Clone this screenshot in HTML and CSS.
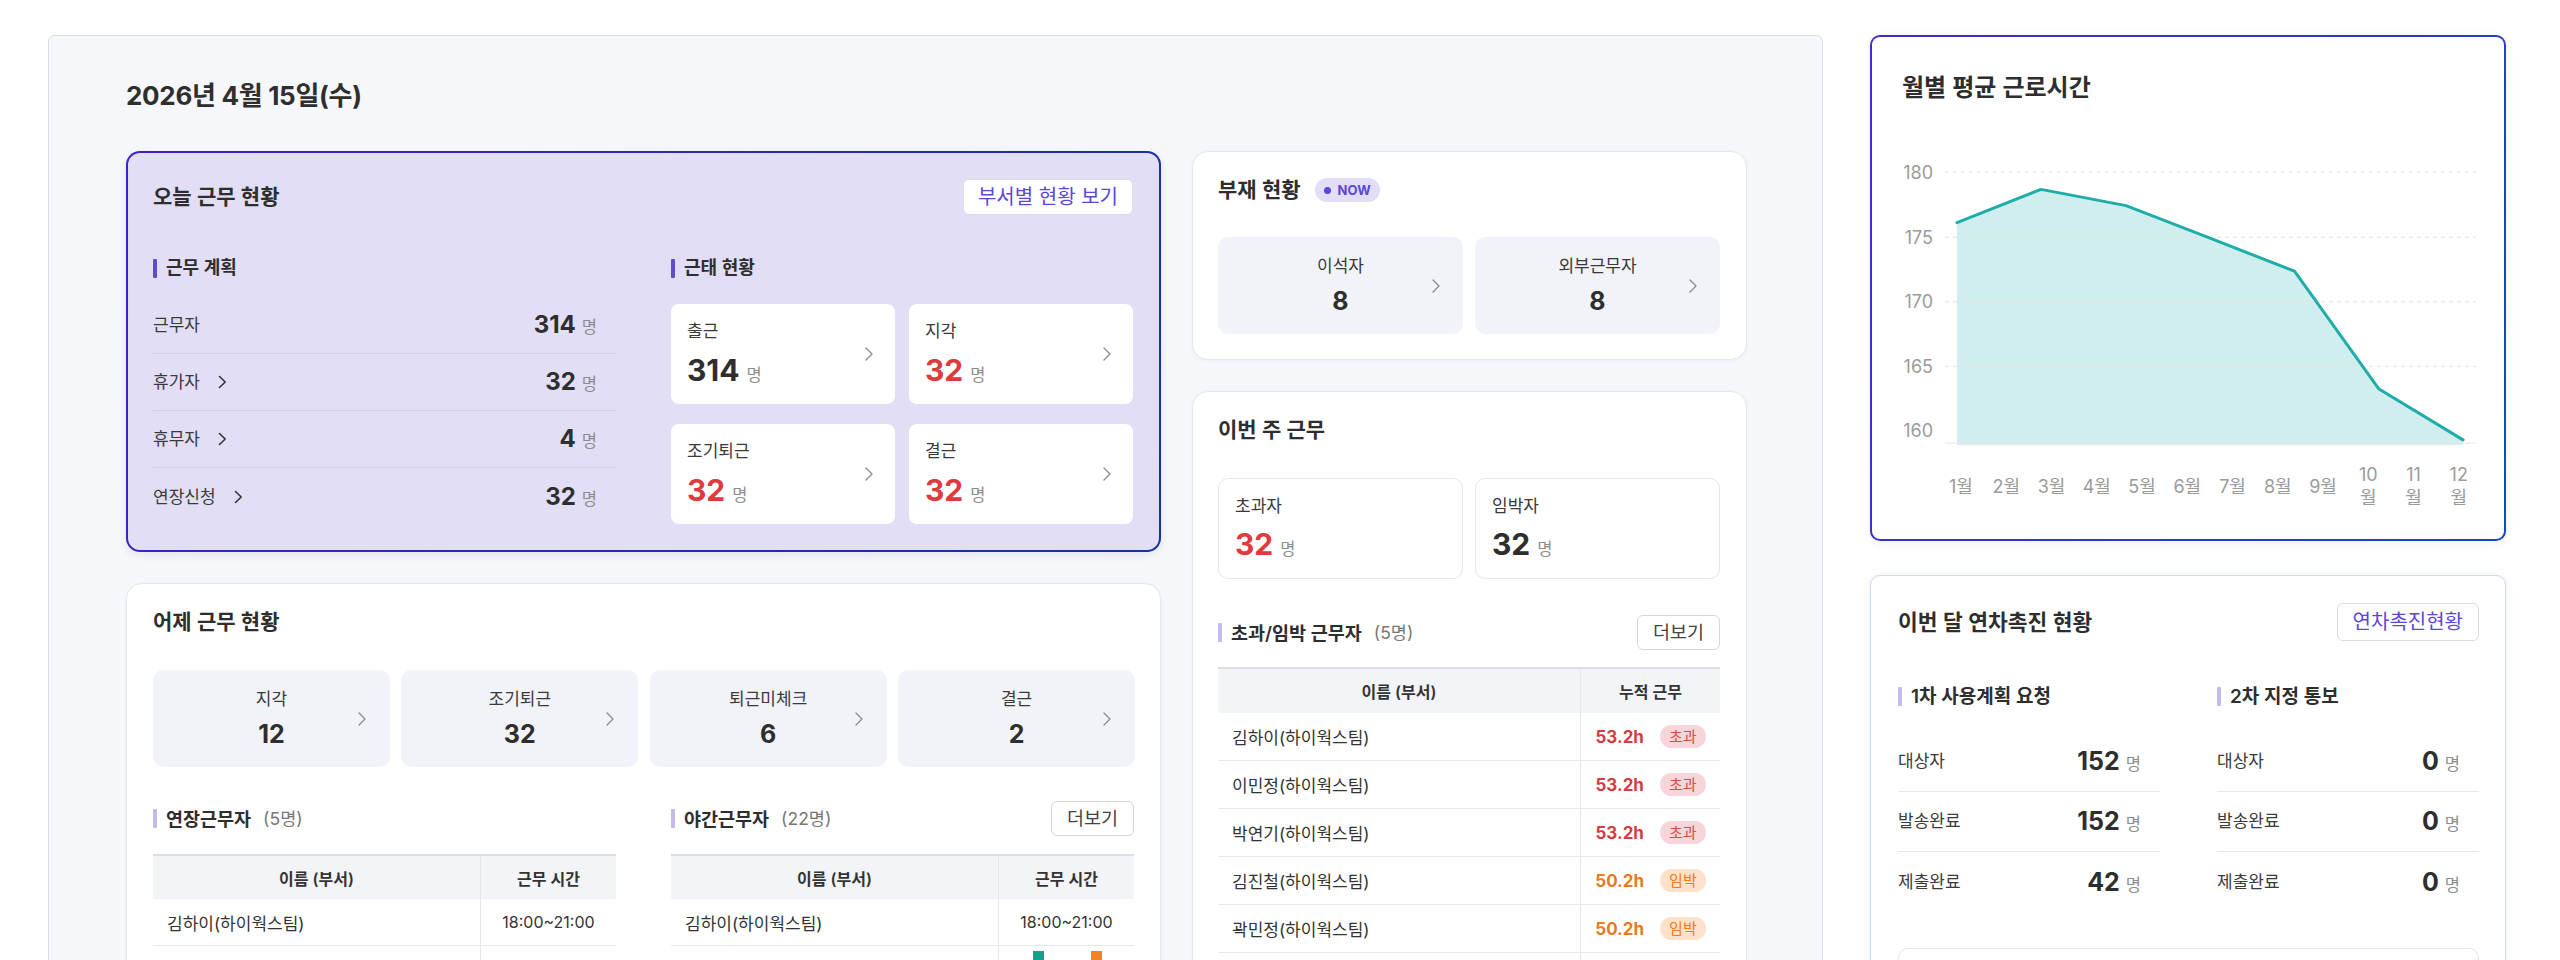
FILE: index.html
```html
<!DOCTYPE html>
<html lang="ko">
<head>
<meta charset="utf-8">
<title>근무 현황 대시보드</title>
<link rel="stylesheet" href="styles.css">
</head>
<body>
<div class="page">
  <section class="panel">
    <h1 class="date">2026년 4월 15일(수)</h1>
    <div class="cols">
      <div class="col">
        <div class="today">
          <div class="card-head">
            <h2 class="card-title">오늘 근무 현황</h2>
            <button class="btn">부서별 현황 보기</button>
          </div>
          <div class="today-body">
            <div>
              <h3 class="sub dark">근무 계획</h3>
              <ul class="kv">
                <li><span class="kv-label">근무자</span><span class="val"><span class="num">314</span><span class="unit">명</span></span></li>
                <li><span class="kv-label">휴가자<svg class="chev-d" viewBox="0 0 9 14"><path d="M1.5 1.5L7.2 7L1.5 12.5"/></svg></span><span class="val"><span class="num">32</span><span class="unit">명</span></span></li>
                <li><span class="kv-label">휴무자<svg class="chev-d" viewBox="0 0 9 14"><path d="M1.5 1.5L7.2 7L1.5 12.5"/></svg></span><span class="val"><span class="num">4</span><span class="unit">명</span></span></li>
                <li><span class="kv-label">연장신청<svg class="chev-d" viewBox="0 0 9 14"><path d="M1.5 1.5L7.2 7L1.5 12.5"/></svg></span><span class="val"><span class="num">32</span><span class="unit">명</span></span></li>
              </ul>
            </div>
            <div>
              <h3 class="sub dark">근태 현황</h3>
              <div class="tiles">
                <div class="tile"><div><div class="tile-label">출근</div><div class="val"><span class="num">314</span><span class="unit">명</span></div></div><svg class="chev" viewBox="0 0 8 14"><path d="M1 1L7 7L1 13"/></svg></div>
                <div class="tile"><div><div class="tile-label">지각</div><div class="val"><span class="num red">32</span><span class="unit">명</span></div></div><svg class="chev" viewBox="0 0 8 14"><path d="M1 1L7 7L1 13"/></svg></div>
                <div class="tile"><div><div class="tile-label">조기퇴근</div><div class="val"><span class="num red">32</span><span class="unit">명</span></div></div><svg class="chev" viewBox="0 0 8 14"><path d="M1 1L7 7L1 13"/></svg></div>
                <div class="tile"><div><div class="tile-label">결근</div><div class="val"><span class="num red">32</span><span class="unit">명</span></div></div><svg class="chev" viewBox="0 0 8 14"><path d="M1 1L7 7L1 13"/></svg></div>
              </div>
            </div>
          </div>
        </div>

        <div class="card yesterday">
          <h2 class="card-title">어제 근무 현황</h2>
          <div class="stats">
            <div class="stat"><div class="stat-text"><div class="stat-label">지각</div><div class="stat-num">12</div></div><svg class="chev" viewBox="0 0 8 14"><path d="M1 1L7 7L1 13"/></svg></div>
            <div class="stat"><div class="stat-text"><div class="stat-label">조기퇴근</div><div class="stat-num">32</div></div><svg class="chev" viewBox="0 0 8 14"><path d="M1 1L7 7L1 13"/></svg></div>
            <div class="stat"><div class="stat-text"><div class="stat-label">퇴근미체크</div><div class="stat-num">6</div></div><svg class="chev" viewBox="0 0 8 14"><path d="M1 1L7 7L1 13"/></svg></div>
            <div class="stat"><div class="stat-text"><div class="stat-label">결근</div><div class="stat-num">2</div></div><svg class="chev" viewBox="0 0 8 14"><path d="M1 1L7 7L1 13"/></svg></div>
          </div>
          <div class="lists">
            <div>
              <div class="list-head"><h3 class="sub">연장근무자<span class="count">(5명)</span></h3></div>
              <div class="tbl">
                <div class="tr th-row"><div>이름 (부서)</div><div>근무 시간</div></div>
                <div class="tr td-row"><div>김하이(하이웍스팀)</div><div>18:00~21:00</div></div>
                <div class="tr td-row"><div></div><div></div></div>
              </div>
            </div>
            <div>
              <div class="list-head"><h3 class="sub">야간근무자<span class="count">(22명)</span></h3><button class="btn-sm">더보기</button></div>
              <div class="tbl">
                <div class="tr th-row"><div>이름 (부서)</div><div>근무 시간</div></div>
                <div class="tr td-row"><div>김하이(하이웍스팀)</div><div>18:00~21:00</div></div>
                <div class="tr td-row"><div></div><div class="bars"><span class="bar teal"></span><span class="bar orange"></span></div></div>
              </div>
            </div>
          </div>
        </div>
      </div>

      <div class="col">
        <div class="card absent">
          <div class="title-row">
            <h2 class="card-title">부재 현황</h2>
            <span class="badge-now">NOW</span>
          </div>
          <div class="boxes">
            <div class="stat"><div class="stat-text"><div class="stat-label">이석자</div><div class="stat-num">8</div></div><svg class="chev" viewBox="0 0 8 14"><path d="M1 1L7 7L1 13"/></svg></div>
            <div class="stat"><div class="stat-text"><div class="stat-label">외부근무자</div><div class="stat-num">8</div></div><svg class="chev" viewBox="0 0 8 14"><path d="M1 1L7 7L1 13"/></svg></div>
          </div>
        </div>

        <div class="card week">
          <h2 class="card-title">이번 주 근무</h2>
          <div class="wboxes">
            <div class="wbox"><div class="tile-label">초과자</div><div class="val"><span class="num red">32</span><span class="unit">명</span></div></div>
            <div class="wbox"><div class="tile-label">임박자</div><div class="val"><span class="num">32</span><span class="unit">명</span></div></div>
          </div>
          <div class="list-head"><h3 class="sub">초과/임박 근무자<span class="count">(5명)</span></h3><button class="btn-sm">더보기</button></div>
          <div class="tbl wide">
            <div class="tr th-row"><div>이름 (부서)</div><div>누적 근무</div></div>
            <div class="tr td-row"><div>김하이(하이웍스팀)</div><div><span class="hours over">53.2h</span><span class="tag over">초과</span></div></div>
            <div class="tr td-row"><div>이민정(하이웍스팀)</div><div><span class="hours over">53.2h</span><span class="tag over">초과</span></div></div>
            <div class="tr td-row"><div>박연기(하이웍스팀)</div><div><span class="hours over">53.2h</span><span class="tag over">초과</span></div></div>
            <div class="tr td-row"><div>김진철(하이웍스팀)</div><div><span class="hours near">50.2h</span><span class="tag near">임박</span></div></div>
            <div class="tr td-row"><div>곽민정(하이웍스팀)</div><div><span class="hours near">50.2h</span><span class="tag near">임박</span></div></div>
            <div class="tr td-row"><div></div><div></div></div>
          </div>
        </div>
      </div>
    </div>
  </section>

  <aside class="right">
    <div class="chart-card">
      <h2 class="card-title chart-title">월별 평균 근로시간</h2>
      <svg class="chart" width="574" height="370" viewBox="0 0 574 370">
        <path class="area" d="M55 72.7L139 39.4L224 55.6L308 88.2L392.5 121.2L476.6 238.7L561 289.9L561 295L55 295Z"/>
        <line class="grid" x1="43" y1="22.2" x2="574" y2="22.2"/>
        <line class="grid" x1="43" y1="87.2" x2="574" y2="87.2"/>
        <line class="grid" x1="43" y1="151.8" x2="574" y2="151.8"/>
        <line class="grid" x1="43" y1="216.4" x2="574" y2="216.4"/>
        <line class="axis" x1="43" y1="293" x2="574" y2="293"/>
        <polyline class="line" points="55,72.7 139,39.4 224,55.6 308,88.2 392.5,121.2 476.6,238.7 561,289.9"/>
        <g class="ylab">
          <text x="31" y="22.2">180</text>
          <text x="31" y="87.2">175</text>
          <text x="31" y="151.8">170</text>
          <text x="31" y="216.4">165</text>
          <text x="31" y="280.6">160</text>
        </g>
        <g class="xlab">
          <text x="59" y="336.6">1월</text>
          <text x="104.25" y="336.6">2월</text>
          <text x="149.5" y="336.6">3월</text>
          <text x="194.75" y="336.6">4월</text>
          <text x="240" y="336.6">5월</text>
          <text x="285.25" y="336.6">6월</text>
          <text x="330.5" y="336.6">7월</text>
          <text x="375.75" y="336.6">8월</text>
          <text x="421" y="336.6">9월</text>
          <text x="466.25" y="324">10</text><text x="466.25" y="347">월</text>
          <text x="511.5" y="324">11</text><text x="511.5" y="347">월</text>
          <text x="556.75" y="324">12</text><text x="556.75" y="347">월</text>
        </g>
      </svg>
    </div>

    <div class="promo">
      <div class="card-head tall">
        <h2 class="card-title promo-title">이번 달 연차촉진 현황</h2>
        <button class="btn tall">연차촉진현황</button>
      </div>
      <div class="promo-body">
        <div>
          <h3 class="sub lg">1차 사용계획 요청</h3>
          <ul class="kv kv2">
            <li><span class="kv-label">대상자</span><span class="val"><span class="num">152</span><span class="unit">명</span></span></li>
            <li><span class="kv-label">발송완료</span><span class="val"><span class="num">152</span><span class="unit">명</span></span></li>
            <li><span class="kv-label">제출완료</span><span class="val"><span class="num">42</span><span class="unit">명</span></span></li>
          </ul>
        </div>
        <div>
          <h3 class="sub lg">2차 지정 통보</h3>
          <ul class="kv kv2">
            <li><span class="kv-label">대상자</span><span class="val"><span class="num">0</span><span class="unit">명</span></span></li>
            <li><span class="kv-label">발송완료</span><span class="val"><span class="num">0</span><span class="unit">명</span></span></li>
            <li><span class="kv-label">제출완료</span><span class="val"><span class="num">0</span><span class="unit">명</span></span></li>
          </ul>
        </div>
      </div>
      <div class="promo-box"></div>
    </div>
  </aside>
</div>
</body>
</html>
```
FILE: styles.css
```css
* { box-sizing: border-box; }
html, body { margin: 0; padding: 0; height: 960px; overflow: hidden; background: #fff; }
body { font-family: Inter, "Noto Sans CJK KR", sans-serif; color: #333; }
h1, h2, h3 { margin: 0; }
button { font-family: inherit; cursor: pointer; }

.page { display: flex; align-items: flex-start; gap: 47px; padding: 35px 0 0 48px; }

.panel {
  flex: none; width: 1775px; min-height: 1100px;
  background: #f6f7fb; border: 1px solid #d9e1ec; border-radius: 6px;
  padding: 42px 74px 40px 77px;
}
.date { margin-bottom: 37px; font-size: 26px; line-height: 36px; font-weight: 700; color: #2e2e2e; letter-spacing: -0.3px; }

.cols { display: grid; grid-template-columns: 1035px 555px; column-gap: 31px; align-items: start; }
.col { display: flex; flex-direction: column; gap: 31px; }

.card { background: #fff; border: 1px solid #e4e7ed; border-radius: 16px; box-shadow: 0 1px 4px rgba(20, 30, 60, 0.04); }
.card-title { font-size: 21px; line-height: 28px; font-weight: 600; color: #2e2e2e; }

.card-head { display: flex; justify-content: space-between; align-items: center; height: 36px; }
.card-head.tall { height: 38px; }
.btn {
  height: 36px; padding: 0 14px; background: #fff; border: 1px solid #dcdce6; border-radius: 6px;
  font-size: 20px; color: #5a46d8; line-height: 1;
}
.btn.tall { height: 38px; padding: 0 15px; }
.btn-sm {
  height: 35px; padding: 0 15px; background: #fff; border: 1px solid #d3d6dc; border-radius: 6px;
  font-size: 18.5px; color: #444; line-height: 1;
}

/* today */
.today {
  height: 401px; border: 2px solid transparent; border-radius: 14px;
  background: linear-gradient(#e2def5, #e2def5) padding-box, linear-gradient(120deg, #4420c0, #12339e) border-box;
  padding: 26px 26px 0 25px;
  box-shadow: 0 3px 8px rgba(30, 30, 80, 0.08);
}
.today-body { display: grid; grid-template-columns: 463px 462px; column-gap: 55px; margin-top: 42px; }

.sub { display: flex; align-items: center; font-size: 18.5px; line-height: 22px; font-weight: 600; color: #2e2e2e; }
.sub::before { content: ""; flex: none; width: 4px; height: 19px; background: #c4baf0; margin-right: 9px; border-radius: 1px; }
.sub.dark { font-size: 18px; }
.sub.dark::before { background: #604acf; }
.sub.lg { font-size: 19px; }
.count { font-size: 17.5px; font-weight: 400; color: #777; margin-left: 12px; }

.kv { list-style: none; margin: 18px 0 0; padding: 0; }
.kv li { height: 57px; display: flex; align-items: center; justify-content: space-between; padding-right: 19px; border-bottom: 1px solid #d4cef0; }
.kv li:last-child { border-bottom: none; }
.kv-label { display: flex; align-items: center; gap: 18px; font-size: 17px; line-height: 22px; color: #3a3a3a; }
.val { display: flex; align-items: baseline; }
.num { font-weight: 700; color: #2e2e2e; }
.kv .num { font-size: 24px; line-height: 30px; }
.unit { font-size: 16.5px; color: #8d8d8d; margin-left: 6px; font-weight: 400; }
.red { color: #e03a3e; }

.chev-d { width: 9px; height: 14px; flex: none; }
.chev-d path { fill: none; stroke: #333; stroke-width: 1.6; stroke-linecap: round; stroke-linejoin: round; }
.chev { width: 8px; height: 14px; flex: none; }
.chev path { fill: none; stroke: #8a8a8a; stroke-width: 1.3; stroke-linecap: round; stroke-linejoin: round; }

.tiles { display: grid; grid-template-columns: 1fr 1fr; gap: 20px 14px; margin-top: 25px; }
.tile { height: 100px; background: #fff; border-radius: 8px; display: flex; align-items: center; justify-content: space-between; padding: 0 22px 0 16px; }
.tile-label { font-size: 17px; line-height: 22px; color: #3a3a3a; }
.tile .val, .wbox .val { margin-top: 10px; }
.tile .num, .wbox .num { font-size: 30px; line-height: 36px; }
.tile .num.red, .wbox .num.red { color: #e03a3e; }
.tile .unit, .wbox .unit { font-size: 16.5px; margin-left: 7px; }

/* yesterday */
.yesterday { padding: 24px 25px 30px 26px; }
.stats { display: grid; grid-template-columns: repeat(4, 1fr); gap: 11.5px; margin-top: 34px; }
.stat { height: 97px; background: #f2f3f8; border-radius: 10px; display: grid; grid-template-columns: 40px 1fr 40px; align-items: center; }
.stat-text { grid-column: 2; text-align: center; }
.stat-label { font-size: 17px; line-height: 22px; color: #3a3a3a; }
.stat-num { font-size: 25px; line-height: 30px; font-weight: 700; margin-top: 9px; color: #2e2e2e; }
.stat .chev { grid-column: 3; justify-self: end; margin-right: 24px; }
.absent .stat .chev { margin-right: 23px; }

.lists { display: grid; grid-template-columns: 463px 463px; column-gap: 55px; margin-top: 34px; }
.list-head { display: flex; align-items: center; justify-content: space-between; height: 35px; }

.tbl { margin-top: 18px; }
.tr { display: grid; grid-template-columns: 327px 1fr; }
.th-row { height: 45px; background: #f3f4f7; border-top: 2px solid #dcdee3; }
.th-row > div { display: flex; align-items: center; justify-content: center; font-size: 16px; font-weight: 600; color: #333; }
.th-row > div + div, .td-row > div + div { border-left: 1px solid #e6e7eb; }
.td-row { height: 47px; border-bottom: 1px solid #e8e9ec; background: #fff; }
.td-row > div { display: flex; align-items: center; font-size: 17px; color: #333; }
.td-row > div:first-child { padding-left: 14px; }
.td-row > div + div { justify-content: center; font-size: 16px; }

.bars { align-items: flex-start !important; justify-content: flex-start !important; padding-top: 5px; }
.bar { display: block; width: 11px; height: 14px; }
.bar.teal { background: #13a08e; margin-left: 34px; }
.bar.orange { background: #f5821f; margin-left: 47px; }

/* absent */
.absent { padding: 24px 26px 25px 25px; }
.title-row { display: flex; align-items: center; gap: 14px; }
.badge-now {
  display: inline-flex; align-items: center; height: 24px; padding: 0 9px; border-radius: 12px;
  background: #e3ddf7; color: #5b46d6; font-size: 13px; font-weight: 700; line-height: 1;
}
.badge-now::before { content: ""; width: 7px; height: 7px; border-radius: 50%; background: #5b46d6; margin-right: 7px; }
.boxes { display: grid; grid-template-columns: 1fr 1fr; gap: 12px; margin-top: 33px; }

/* week */
.week { padding: 24px 26px 40px 25px; }
.wboxes { display: grid; grid-template-columns: 1fr 1fr; gap: 12px; margin-top: 34px; }
.wbox { height: 101px; border: 1.5px solid #e3e6eb; border-radius: 10px; padding-left: 16px; display: flex; flex-direction: column; justify-content: center; }
.wbox .val { margin-top: 9px; }
.week .list-head { margin-top: 36px; }
.tbl.wide { margin-top: 17px; }
.tbl.wide .tr { grid-template-columns: 362px 1fr; }
.tbl.wide .th-row { height: 46px; }
.tbl.wide .td-row { height: 48px; }
.hours { font-size: 17px; font-weight: 700; }
.hours.over { color: #d63c3c; }
.hours.near { color: #ea7a1e; }
.tag { display: inline-flex; align-items: center; height: 23px; padding: 0 9px; margin-left: 16px; border-radius: 12px; font-size: 15px; line-height: 1; }
.tag.over { background: #f8d5d8; color: #d64b4b; }
.tag.near { background: #fde1c9; color: #ef7b22; }

/* right column */
.right { flex: none; width: 636px; display: flex; flex-direction: column; gap: 34px; }
.chart-card {
  height: 506px; border: 2px solid transparent; border-radius: 10px;
  background: linear-gradient(#fff, #fff) padding-box, linear-gradient(120deg, #4a2ac4, #1546c2) border-box;
  padding: 37px 28px 0 30px; box-shadow: 0 2px 10px rgba(30, 40, 90, 0.08);
}
.chart-title { font-size: 24px; }
.chart { display: block; margin-top: 48px; overflow: visible; }
.chart .area { fill: #1aaca8; fill-opacity: 0.2; }
.chart .grid { stroke: #e3e3e3; stroke-width: 1; stroke-dasharray: 4 4; }
.chart .axis { stroke: #e6e6e6; stroke-width: 1; }
.chart .line { fill: none; stroke: #1fada9; stroke-width: 3; stroke-linejoin: round; stroke-linecap: round; }
.chart text { font-family: Inter, "Noto Sans CJK KR", sans-serif; font-size: 18px; fill: #9b9b9b; dominant-baseline: central; }
.chart .ylab text { text-anchor: end; }
.chart .xlab text { text-anchor: middle; }

.promo {
  border: 1.5px solid #cfd9e8; border-radius: 10px; background: #fff; min-height: 520px;
  padding: 26.5px 26px 40px 27px; box-shadow: 0 2px 10px rgba(30, 40, 90, 0.08);
}
.promo-title { font-size: 21.5px; }
.promo-body { display: grid; grid-template-columns: 1fr 1fr; column-gap: 57px; margin-top: 45px; }
.kv2 { margin-top: 24px; }
.kv2 li { height: 60px; border-bottom-color: #e8e9ec; }
.kv2 .num { font-size: 25px; }
.promo-box { margin-top: 36px; height: 120px; border: 1.5px solid #e3e6eb; border-radius: 10px; }
```
